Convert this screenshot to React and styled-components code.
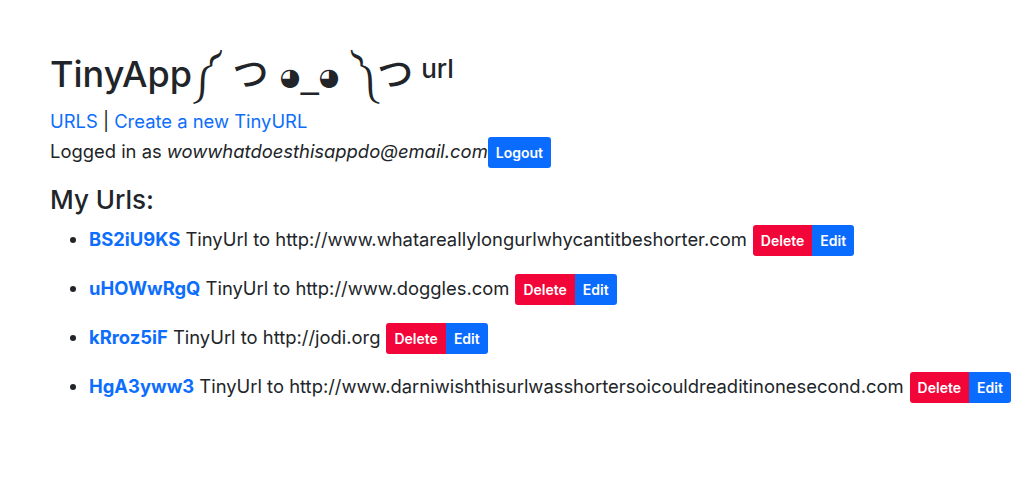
import React from 'react';
import styled, { createGlobalStyle } from 'styled-components';

const GlobalStyle = createGlobalStyle`
  body {
    margin: 0;
    background: #fff;
    color: #212529;
    font-family: Inter, "Liberation Sans", "Noto Sans", sans-serif;
    font-size: 18.4px;
    line-height: 1.5;
  }
`;

const Page = styled.div`
  padding: 53px 8px 40px 50px;
`;

const Title = styled.h1`
  margin: 0 0 12px;
  font-size: 36px;
  font-weight: 500;
  line-height: 1.2;
  white-space: nowrap;
`;

const Face = styled.span`
  font-family: "DejaVu Sans", "Noto Sans CJK JP", sans-serif;
`;

const Eye = styled.span`
  font-size: 24px;
  vertical-align: 2px;
`;

const Small = styled.span`
  font-size: 26px;
  vertical-align: 9px;
  margin-left: 8px;
`;

const Nav = styled.div`
  margin-bottom: 1px;
`;

const Link = styled.a`
  color: #0d6efd;
  text-decoration: none;
  font-weight: ${({ $bold }) => ($bold ? 700 : 400)};
`;

const UserLine = styled.div`
  display: flex;
  align-items: center;
`;

const Btn = styled.button`
  border: none;
  font-family: inherit;
  font-size: 14px;
  font-weight: 600;
  color: #fff;
  padding: 6px 8px;
  line-height: 19px;
  background: ${({ $danger }) => ($danger ? '#f20538' : '#0a6cff')};
  border-radius: ${({ $pos }) =>
    $pos === 'left' ? '3px 0 0 3px' : $pos === 'right' ? '0 3px 3px 0' : '3px'};
`;

const Heading = styled.h2`
  margin: 16px 0 10px;
  font-size: 26px;
  font-weight: 500;
  line-height: 1.2;
`;

const List = styled.ul`
  margin: 0;
  padding-left: 39px;
  white-space: nowrap;
`;

const Item = styled.li`
  margin-bottom: 18px;
`;

const Group = styled.span`
  display: inline-flex;
  margin-left: 6px;
  vertical-align: middle;
`;

const urls = [
  ['BS2iU9KS', 'http://www.whatareallylongurlwhycantitbeshorter.com'],
  ['uHOWwRgQ', 'http://www.doggles.com'],
  ['kRroz5iF', 'http://jodi.org'],
  ['HgA3yww3', 'http://www.darniwishthisurlwasshortersoicouldreaditinonesecond.com'],
];

export default function App() {
  return (
    <Page>
      <GlobalStyle />
      <Title>
        TinyApp
        <Face>
          ༼ つ <Eye>◕</Eye>_<Eye>◕</Eye> ༽つ
        </Face>
        <Small>url</Small>
      </Title>
      <Nav>
        <Link href="#">URLS</Link> | <Link href="#">Create a new TinyURL</Link>
      </Nav>
      <UserLine>
        Logged in as&nbsp;<em>wowwhatdoesthisappdo@email.com</em>
        <Btn>Logout</Btn>
      </UserLine>
      <Heading>My Urls:</Heading>
      <List>
        {urls.map(([code, long]) => (
          <Item key={code}>
            <Link href="#" $bold>{code}</Link> TinyUrl to {long}
            <Group>
              <Btn $danger $pos="left">Delete</Btn>
              <Btn $pos="right">Edit</Btn>
            </Group>
          </Item>
        ))}
      </List>
    </Page>
  );
}
